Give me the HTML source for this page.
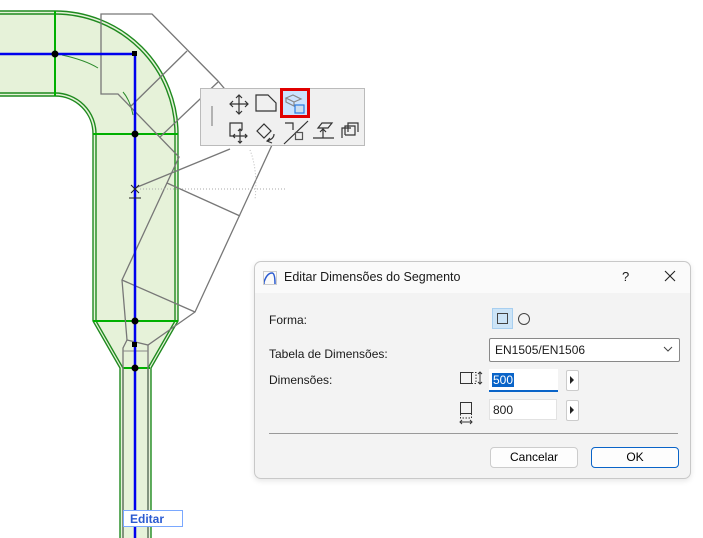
<!DOCTYPE html>
<html><head><meta charset="utf-8"><style>
body{margin:0;width:703px;height:538px;overflow:hidden;background:#fff;font-family:"Liberation Sans","Segoe UI",sans-serif;position:relative}
.abs{position:absolute}
.lbl{font-size:12px;color:#1a1a1a}
</style></head><body>
<svg class="abs" style="left:0;top:0" width="703" height="538">
<path d="M0,11 L55,11 A123,123 0 0 1 178,134 L178,321 L151,368 L151,538 L120,538 L120,368 L93,321 L93,134 A38,38 0 0 0 55,96 L0,96 Z" fill="#e6f2d9"/>
<g fill="none" stroke="#1f8a1f" stroke-width="1.4">
<path d="M0,11 L55,11 A123,123 0 0 1 178,134 L178,321 L151,368 L151,538"/>
<path d="M0,14 L55,14 A120,120 0 0 1 175,134 L175,321 L148,368 L148,538"/>
<path d="M0,96 L55,96 A38,38 0 0 1 93,134 L93,321 L120,368 L120,538"/>
<path d="M0,93 L55,93 A41,41 0 0 1 96,134 L96,321 L123,368 L123,538"/>
</g>
<g stroke="#00b000" stroke-width="2">
<line x1="55" y1="11" x2="55" y2="96"/><line x1="93" y1="134" x2="178" y2="134"/><line x1="93" y1="321" x2="178" y2="321"/><line x1="123" y1="368" x2="150" y2="368"/>
</g>
<path d="M62,55 Q85,60 98,68" stroke="#2a8a2a" fill="none"/>
<path d="M123,92 Q130,100 133,115" stroke="#2a8a2a" fill="none"/>
<g stroke="#777" stroke-width="1.3" fill="none">
<path d="M101,14 L152,14 L218,81 L272,145 L195,312 L148,345 L127,340 L122,280 L179,157 L118,94 L101,94 Z"/>
<line x1="130" y1="107" x2="187" y2="51"/><line x1="160" y1="137" x2="218" y2="82"/>
<line x1="135" y1="188" x2="230" y2="149"/><line x1="167" y1="183" x2="240" y2="216"/>
<line x1="122" y1="280" x2="195" y2="312"/>
<path d="M127,340 L123,348 L123,538 M148,345 L148,538"/>
</g>
<line x1="123" y1="351" x2="148" y2="351" stroke="#888"/>
<line x1="140" y1="189" x2="287" y2="189" stroke="#aaa" stroke-dasharray="1,2"/>
<path d="M250,150 Q258,170 255,200" stroke="#bbb" fill="none" stroke-dasharray="1,2"/>
<g stroke="#0000ee" stroke-width="2.5" fill="none"><path d="M0,54 L135,54 L135,538"/></g>
<g fill="#000"><circle cx="55" cy="54" r="3.5"/><circle cx="135" cy="134" r="3.5"/><circle cx="135" cy="321" r="3.5"/><circle cx="135" cy="368" r="3.5"/>
<rect x="132" y="51" width="5" height="5"/><rect x="132" y="342" width="5" height="5"/></g>
<path d="M131,185 L139,193 M139,185 L131,193 M129,198 L141,198" stroke="#222"/>
</svg>
<div class="abs" style="left:200px;top:88px;width:163px;height:56px;background:#f0f0f0;border:1px solid #bbb"></div>
<svg class="abs" style="left:200px;top:88px" width="165" height="58" fill="none" stroke="#333" stroke-width="1.2">
<line x1="12" y1="18" x2="12" y2="38" stroke="#888"/>
<path d="M39,7 V26 M30,16 H48 M36,10 L39,7 L42,10 M36,23 L39,26 L42,23 M33,13 L30,16 L33,19 M45,13 L48,16 L45,19"/>
<path d="M56,23 V7 H68 L76,15 V23 Z"/>
<rect x="81.5" y="1.5" width="27" height="27" fill="#cce4ff" stroke="#e00000" stroke-width="3"/>
<path d="M86,10 L93,7 L101,11 L94,14 Z M86,10 V14 L94,18 V14" stroke="#888"/>
<rect x="95" y="17" width="9" height="8" stroke="#2a7ae0" fill="#cde"/>
<path d="M42,42 V35 H30 V48 H34 M40,41 V55 M33,48 H47 M38,43 L40,41 L42,43 M38,53 L40,55 L42,53 M35,46 L33,48 L35,50 M45,46 L47,48 L45,50"/>
<path d="M57,43 L64,36 L71,43 L64,50 Z M67,53 Q74,51 74,46 M72,55 L67,53 L70,50"/>
<path d="M85,35 H93 V42 M84,56 L108,33" /><rect x="95.5" y="44.5" width="7" height="7" stroke="#555"/>
<path d="M118,40 L122,35 H132 L128,40 Z M113,50 H134 M123,50 V41 M120,44 L123,41 L126,44"/>
<path d="M142,50 V40 H151 M145,47 V38 H155 V47 H145 M148,44 V35 H158 V44"/>
</svg>
<div class="abs" style="left:254px;top:261px;width:435px;height:216px;background:#f3f3f3;border:1px solid #c8c8c8;border-radius:7px;box-shadow:0 2px 6px rgba(0,0,0,.1)">
<div class="abs" style="left:0;top:0;width:435px;height:31px;background:#fafafa;border-radius:7px 7px 0 0"></div>
<svg class="abs" style="left:8px;top:9px" width="14" height="14"><path d="M1,13 L1,11 Q4,2 9,2 Q12,2 12,13" stroke="#2a5ad0" fill="none" stroke-width="1.5"/><rect x="0.5" y="0.5" width="13" height="13" fill="none" stroke="#ccc"/></svg>
<div class="abs lbl" style="left:29px;top:8px;font-size:12.5px">Editar Dimensões do Segmento</div>
<div class="abs lbl" style="left:367px;top:7px;font-size:13px">?</div>
<svg class="abs" style="left:409px;top:8px" width="12" height="12"><path d="M1,1 L11,11 M11,1 L1,11" stroke="#222" stroke-width="1.1"/></svg>
<div class="abs lbl" style="left:14px;top:51px">Forma:</div>
<div class="abs" style="left:237px;top:46px;width:21px;height:21px;background:#cce4f7;border:1px solid #a8cff0;box-sizing:border-box"></div>
<div class="abs" style="left:242px;top:51px;width:11px;height:11px;border:1px solid #444;box-sizing:border-box"></div>
<div class="abs" style="left:263px;top:51px;width:12px;height:12px;border:1px solid #444;border-radius:50%;box-sizing:border-box"></div>
<div class="abs lbl" style="left:14px;top:85px">Tabela de Dimensões:</div>
<div class="abs" style="left:234px;top:76px;width:189px;height:22px;background:#fff;border:1px solid #888;border-radius:2px"></div>
<div class="abs lbl" style="left:240px;top:81px">EN1505/EN1506</div>
<svg class="abs" style="left:408px;top:83px" width="10" height="8"><path d="M1,2 L5,6 L9,2" stroke="#444" fill="none"/></svg>
<div class="abs lbl" style="left:14px;top:111px">Dimensões:</div>
<svg class="abs" style="left:204px;top:108px" width="28" height="60" fill="none" stroke="#333">
<rect x="1.5" y="2.5" width="11" height="11"/><path d="M13,2.5 H17 V13.5 H13" stroke-dasharray="1.5,1.5"/><path d="M21,2 V14 M19,4 L21,2 L23,4 M19,12 L21,14 L23,12"/>
<rect x="1.5" y="32.5" width="11" height="11"/><path d="M1.5,44 V48 H12.5 V44" stroke-dasharray="1.5,1.5"/><path d="M1,52 H13 M3,50 L1,52 L3,54 M11,50 L13,52 L11,54"/>
</svg>
<div class="abs" style="left:234px;top:107px;width:69px;height:21px;background:#fff;border-bottom:2px solid #0a64c8"></div>
<div class="abs lbl" style="left:237px;top:111px;background:#0a64c8;color:#fff;padding:0 1px">500</div>
<div class="abs" style="left:311px;top:108px;width:11px;height:19px;background:#fff;border:1px solid #ccc;border-radius:2px"></div>
<svg class="abs" style="left:314px;top:113px" width="6" height="10"><path d="M1,1 L5,5 L1,9Z" fill="#222"/></svg>
<div class="abs" style="left:234px;top:137px;width:68px;height:21px;background:#fff;border:1px solid #e2e2e2;box-sizing:border-box"></div>
<div class="abs lbl" style="left:238px;top:141px">800</div>
<div class="abs" style="left:311px;top:138px;width:11px;height:19px;background:#fff;border:1px solid #ccc;border-radius:2px"></div>
<svg class="abs" style="left:314px;top:143px" width="6" height="10"><path d="M1,1 L5,5 L1,9Z" fill="#222"/></svg>
<div class="abs" style="left:14px;top:171px;width:409px;height:1px;background:#999"></div>
<div class="abs" style="left:235px;top:185px;width:86px;height:19px;background:#fdfdfd;border:1px solid #ccc;border-radius:4px;text-align:center;line-height:19px;font-size:12px">Cancelar</div>
<div class="abs" style="left:336px;top:185px;width:86px;height:19px;background:#fdfdfd;border:1px solid #0a64c8;border-radius:4px;text-align:center;line-height:19px;font-size:12px">OK</div>
</div>
<div class="abs" style="left:123px;top:510px;width:60px;height:17px;background:#fff;border:1px solid #7aa8ff;color:#2a5ad0;font-weight:bold;font-size:12px;line-height:17px;padding-left:6px;box-sizing:border-box">Editar</div>
</body></html>
